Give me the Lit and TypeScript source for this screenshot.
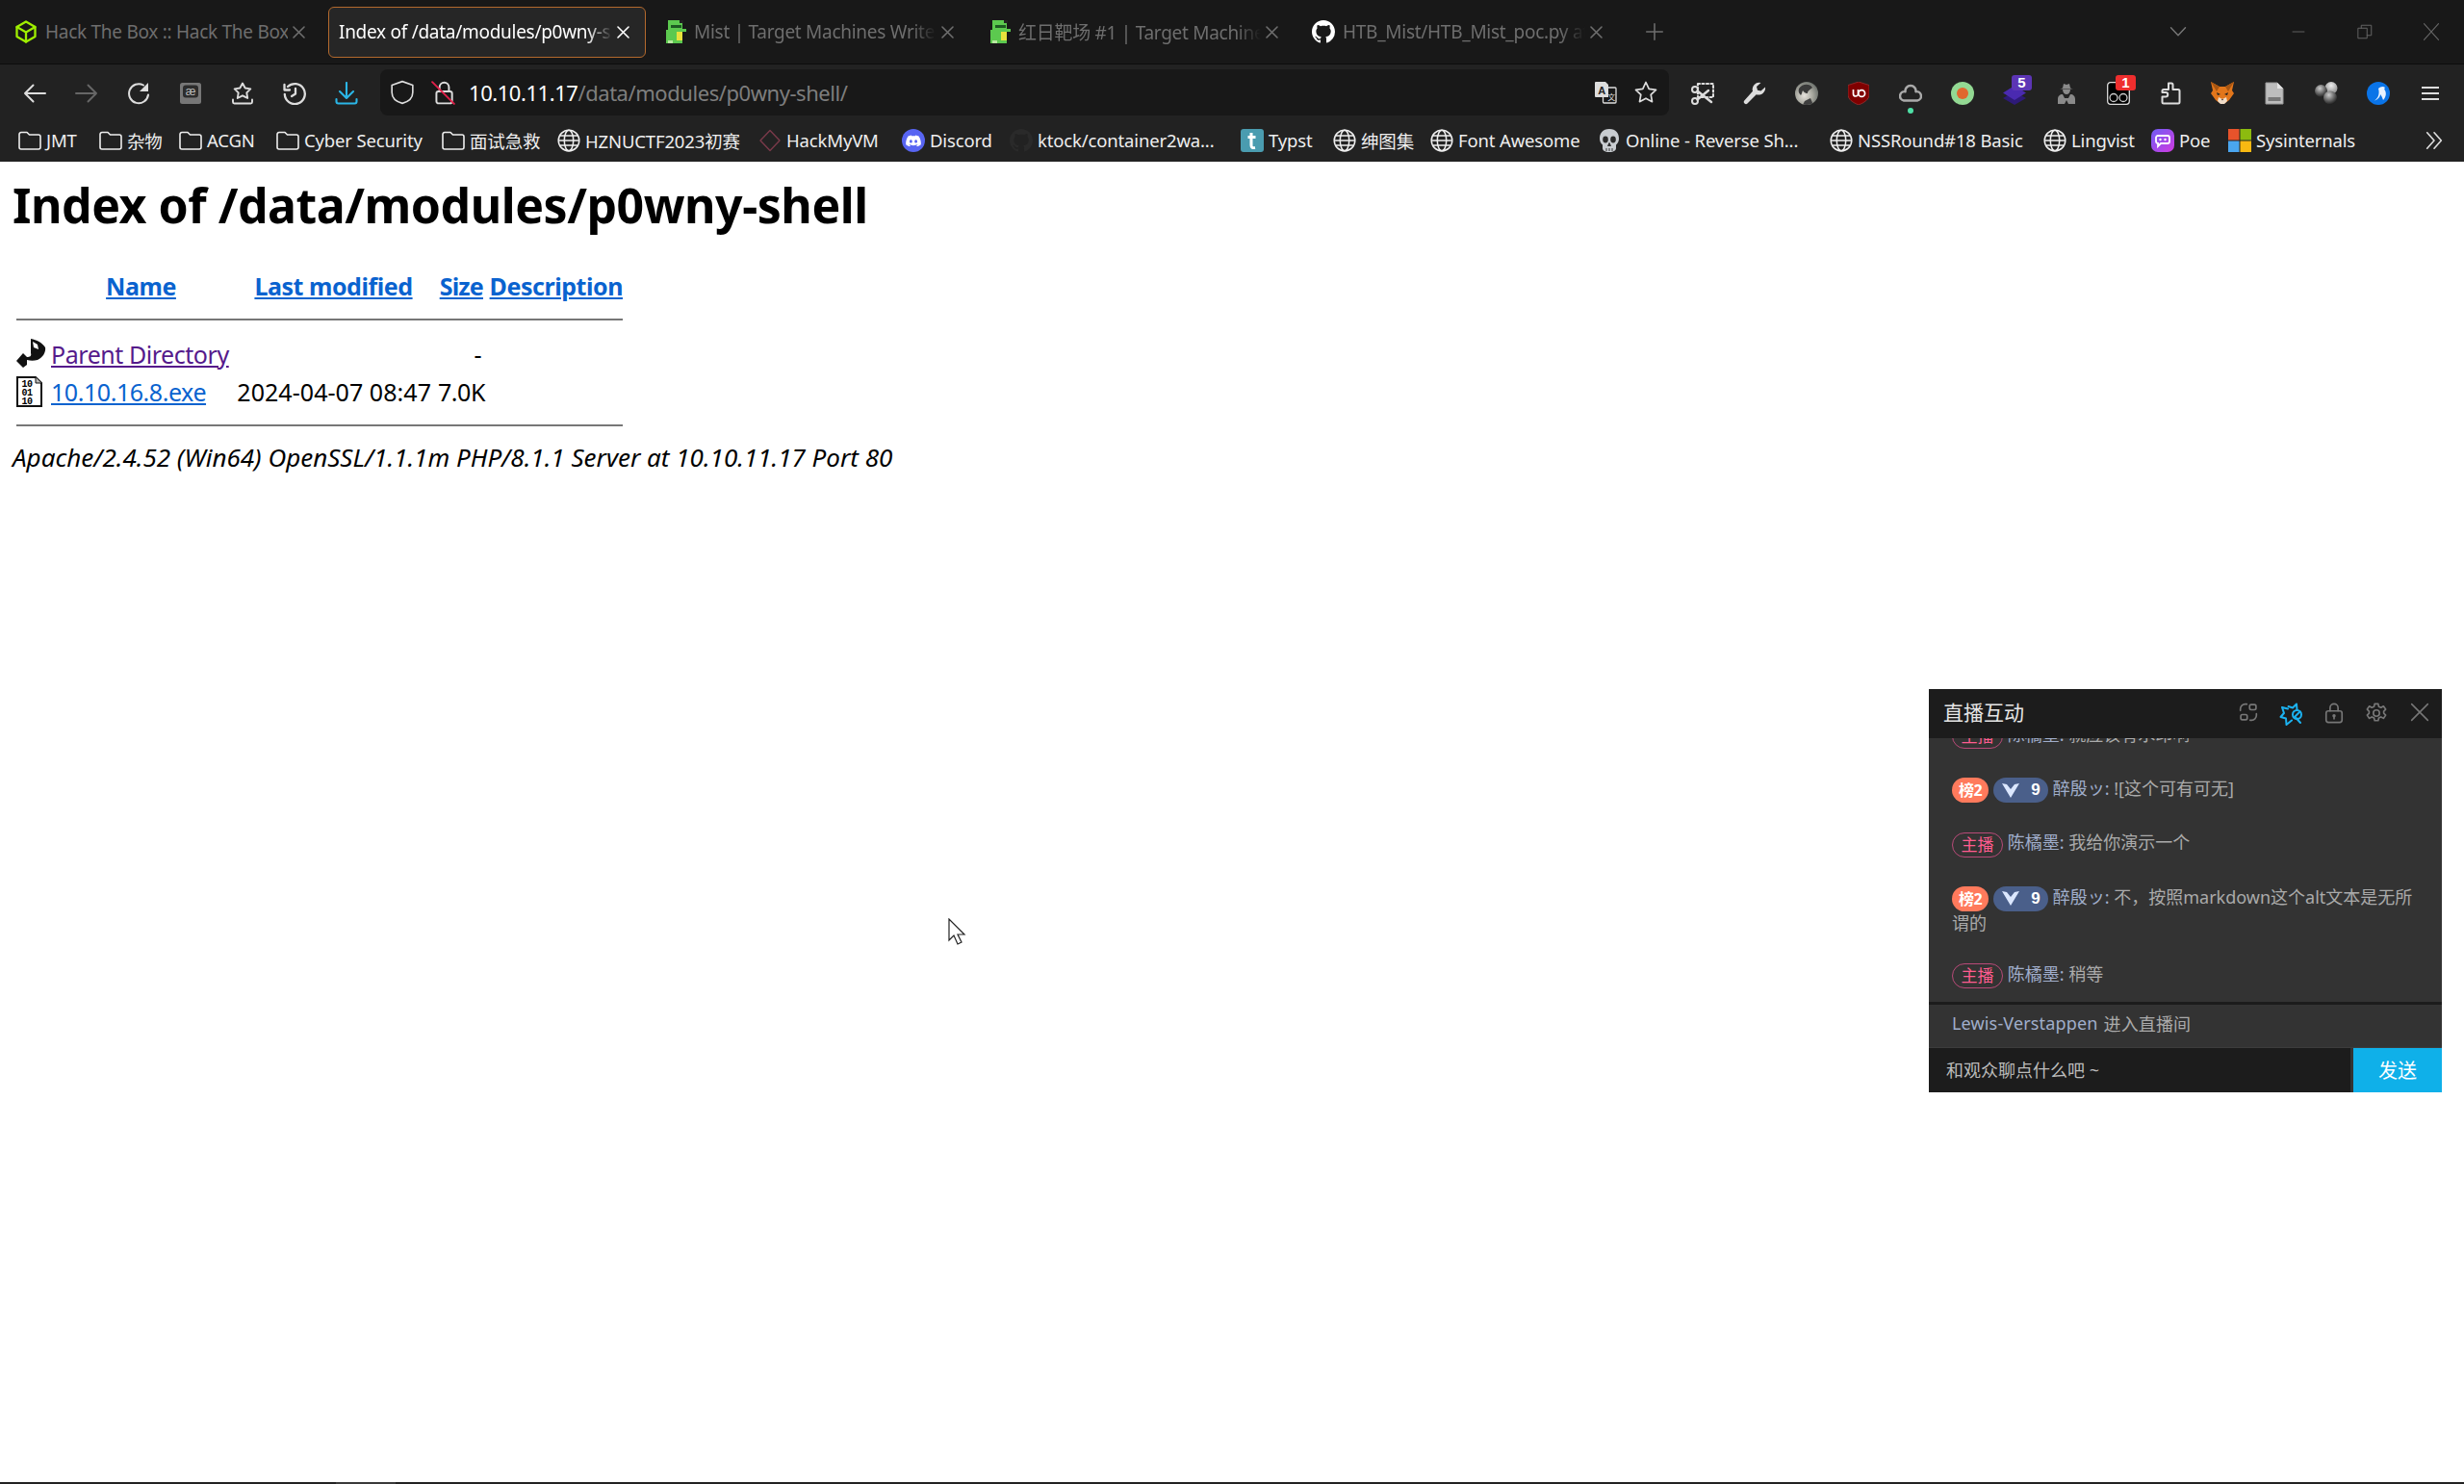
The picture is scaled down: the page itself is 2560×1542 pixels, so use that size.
import { LitElement, html, css, svg } from "lit";
import { customElement } from "lit/decorators.js";

const GH = "M8 0C3.58 0 0 3.58 0 8c0 3.54 2.29 6.53 5.47 7.59.4.07.55-.17.55-.38 0-.19-.01-.82-.01-1.49-2.01.37-2.53-.49-2.69-.94-.09-.23-.48-.94-.82-1.13-.28-.15-.68-.52-.01-.53.63-.01 1.08.58 1.23.82.72 1.21 1.87.87 2.33.66.07-.52.28-.87.51-1.07-1.78-.2-3.64-.89-3.64-3.95 0-.87.31-1.59.82-2.15-.08-.2-.36-1.02.08-2.12 0 0 .67-.21 2.2.82.64-.18 1.32-.27 2-.27.68 0 1.36.09 2 .27 1.53-1.04 2.2-.82 2.2-.82.44 1.1.16 1.92.08 2.12.51.56.82 1.27.82 2.15 0 3.07-1.87 3.75-3.65 3.95.29.25.54.73.54 1.48 0 1.07-.01 1.93-.01 2.2 0 .21.15.46.55.38A8.013 8.013 0 0016 8c0-4.42-3.58-8-8-8z";

const ic = (body: unknown, size = 24, vb = "0 0 24 24") =>
  html`<svg width=${size} height=${size} viewBox=${vb} fill="none" stroke="currentColor" stroke-width="1.7" stroke-linecap="round" stroke-linejoin="round">${body}</svg>`;

const folder = ic(svg`<path d="M1 5.500a2 2 0 0 1 2-2h6l2.500 2.500h9.500a2 2 0 0 1 2 2v11a2 2 0 0 1-2 2H3a2 2 0 0 1-2-2z" stroke-width="1.600"/>`);
const globe = ic(svg`<circle cx="12" cy="12" r="10.800" stroke-width="1.500"/><ellipse cx="12" cy="12" rx="4.700" ry="10.800" stroke-width="1.500"/><path d="M1.500 12h21M3 7h18M3 17h18" stroke-width="1.300"/>`);
const dino = ic(svg`<g stroke="none"><rect x="5" y="0" width="15" height="24" fill="#5cc94f"/><rect x="3" y="10" width="3" height="14" fill="#5cc94f"/><rect x="8" y="5" width="11" height="3" fill="#1d5a22"/><rect x="14" y="12" width="6" height="9" fill="#e8e23c"/><rect x="17" y="0" width="4" height="3" fill="#222"/><rect x="5" y="21" width="5" height="3" fill="#b8e8a0"/><rect x="20" y="9" width="4" height="3" fill="#5cc94f"/></g>`);
const htb = ic(svg`<g stroke="#9fef00" stroke-width="2.300"><path d="M12 1.500 21.500 7v10L12 22.500 2.500 17V7z"/><path d="M2.500 7 12 12.500 21.500 7M12 12.500v10"/></g>`);
const gh = (c: string) => html`<svg width="24" height="24" viewBox="0 0 16 16" fill=${c}><path d=${GH}/></svg>`;

const discord = html`<svg width="24" height="24" viewBox="0 0 24 24"><circle cx="12" cy="12" r="12" fill="#5865f2"/><path fill="#fff" d="M17.500 7.500a12 12 0 0 0-3.200-1l-.4.800a11 11 0 0 0-3.800 0l-.4-.8a12 12 0 0 0-3.200 1C4.500 10.500 4 13.400 4.200 16.300a13 13 0 0 0 3.900 2l.8-1.300-1.300-.6.300-.3a9 9 0 0 0 8.200 0l.3.300-1.300.6.800 1.300a13 13 0 0 0 3.900-2c.3-3.300-.5-6.200-2.300-8.800zM9.400 14.500c-.8 0-1.400-.7-1.400-1.600s.6-1.600 1.400-1.600 1.400.7 1.400 1.600-.6 1.600-1.400 1.600zm5.200 0c-.8 0-1.400-.7-1.400-1.600s.6-1.600 1.400-1.600 1.400.7 1.400 1.600-.6 1.600-1.400 1.600z"/></svg>`;
const typst = html`<svg width="24" height="24" viewBox="0 0 24 24"><rect width="24" height="24" rx="3" fill="#4a9cb0"/><path d="M11 4v13c0 2 1 3 4 2.500M7.500 8.500h8" fill="none" stroke="#fff" stroke-width="3"/></svg>`;
const diamond = ic(svg`<path d="M12 1.500 22 12 12 22.500 2 12z" stroke="#7a3a4a" stroke-width="1.400"/>`);
const skull = html`<svg width="24" height="24" viewBox="0 0 24 24"><path fill="#c8ccd0" d="M12 0C5 0 2 4.500 2 10c0 3 1.200 5 3 6.500V20c0 2 2 4 7 4s7-2 7-4v-3.500c1.800-1.500 3-3.500 3-6.500 0-5.500-3-10-10-10z"/><ellipse cx="8" cy="11" rx="2.800" ry="3.400" fill="#2a2a2a"/><ellipse cx="16" cy="11" rx="2.800" ry="3.400" fill="#2a2a2a"/><path d="M12 14.500l-1.500 3h3zM9 20v3M12 20v3M15 20v3" stroke="#2a2a2a" stroke-width=".9" fill="#2a2a2a"/></svg>`;
const poe = html`<svg width="24" height="24" viewBox="0 0 24 24"><defs><linearGradient id="pg" x1="0" y1="0" x2="1" y2="1"><stop offset="0" stop-color="#6f5cf5"/><stop offset="1" stop-color="#d13be0"/></linearGradient></defs><rect width="24" height="24" rx="7" fill="url(#pg)"/><path d="M7 7h10a2 2 0 0 1 2 2v4a2 2 0 0 1-2 2h-7l-3 3v-3a2 2 0 0 1-2-2V9a2 2 0 0 1 2-2z" fill="none" stroke="#fff" stroke-width="1.800"/><circle cx="9.500" cy="11" r="1.200" fill="#fff"/><circle cx="14.500" cy="11" r="1.200" fill="#fff"/></svg>`;
const ms = html`<svg width="24" height="24" viewBox="0 0 24 24"><rect width="11.500" height="11.500" fill="#e8532b"/><rect x="12.500" width="11.500" height="11.500" fill="#8cbb0f"/><rect y="12.500" width="11.500" height="11.500" fill="#4aa6ef"/><rect x="12.500" y="12.500" width="11.500" height="11.500" fill="#f8b912"/></svg>`;

const tabs = [
  { icon: htb, title: "Hack The Box :: Hack The Box", fade: false },
  { icon: null, title: "Index of /data/modules/p0wny-shell/", fade: true, active: true },
  { icon: dino, title: "Mist | Target Machines WriteUp | HackTheBox", fade: true },
  { icon: dino, title: "红日靶场 #1 | Target Machines WriteUp", fade: true },
  { icon: gh("#fff"), title: "HTB_Mist/HTB_Mist_poc.py at main", fade: true },
];

const nav = [
  { c: "", i: ic(svg`<path d="M23 12H2M10.500 3.500 2 12l8.500 8.500" stroke-width="2"/>`, 24) },
  { c: "dim", i: ic(svg`<path d="M1 12h21M13.500 3.500 22 12l-8.500 8.500" stroke-width="2"/>`, 24) },
  { c: "", i: html`<svg width="24" height="24" viewBox="0 0 24 24" fill="none" stroke="currentColor" stroke-width="2" stroke-linecap="round"><path d="M22 13.500A10 10 0 1 1 17 3.500"/><path d="M22 1v9h-9z" fill="currentColor" stroke="none"/></svg>` },
  { c: "", i: html`<svg width="22" height="22" viewBox="0 0 22 22"><rect width="22" height="22" rx="2.500" fill="#777"/><rect x="3" y="2.500" width="16" height="13" rx="3" fill="#2c2c2c"/><text x="11" y="13" font-size="12" text-anchor="middle" fill="#bbb" font-family="Liberation Sans">æ</text></svg>` },
  { c: "", i: ic(svg`<path d="M12 1.500l2.700 5 5.600.9-4 4 .9 5.600L12 14.300 6.800 17l.9-5.600-4-4 5.600-.9zM2 18.500V21a1.500 1.500 0 0 0 1.500 1.500h17A1.500 1.500 0 0 0 22 21v-2.500" stroke-width="1.900"/>`, 24) },
  { c: "", i: ic(svg`<g stroke-width="2.300"><path d="M5 5A10.500 10.500 0 1 1 1.800 13"/><path d="M1.500 3v5.500H7"/><path d="M13 7v5.500l-4 2.500"/></g>`, 24) },
  { c: "blue", i: ic(svg`<g stroke-width="2.100"><path d="M12 1v15.500M5 10l7 7 7-7M1.500 18v2.500a2 2 0 0 0 2 2h17a2 2 0 0 0 2-2V18"/></g>`, 24) },
];

const ext = [
  ic(svg`<rect x="7" y="2" width="16" height="14" stroke-dasharray="2 2.500" stroke-width="2.200"/><circle cx="4" cy="8" r="3" stroke-width="2"/><circle cx="4" cy="20" r="3" stroke-width="2"/><path d="M6.500 9.500 21 21M6.500 18.500 18 9" stroke-width="2.400"/>`, 24),
  ic(svg`<path d="M23 5.500l-4.500 4-3.500-.8L14 5l4.500-4a7 7 0 0 0-8.500 8.800L1.300 19.500a2.200 2.200 0 0 0 3.200 3l9.200-9.300A7 7 0 0 0 23 5.500z" fill="currentColor" stroke="none"/>`, 24),
  html`<svg width="24" height="24" viewBox="0 0 24 24"><defs><radialGradient id="av" cx=".4" cy=".6" r=".65"><stop offset="0" stop-color="#e6e2dc"/><stop offset=".55" stop-color="#a9a9a0"/><stop offset="1" stop-color="#6a6f6a"/></radialGradient><clipPath id="avc"><circle cx="12" cy="12" r="12"/></clipPath></defs><circle cx="12" cy="12" r="12" fill="url(#av)"/><g clip-path="url(#avc)"><path d="M4 7c3-5 11-6 14-1-2 2-5 3-5 6-3 0-4-2-5-3-1 2-1 4-2 5-2-2-3-4-2-7z" fill="#3a3a3a"/><path d="M10 20l6-3 3 7H8z" fill="#3e3e3e"/></g></svg>`,
  html`<svg width="22" height="24" viewBox="0 0 22 24"><path d="M11 0l11 3.500V13c0 5.500-5 8.500-11 11C5 21.500 0 18.500 0 13V3.500z" fill="#800000" stroke="#9c3030" stroke-width=".8"/><path d="M5.500 8v4.500a2.500 2.500 0 0 0 5 0V8" fill="none" stroke="#fff" stroke-width="1.700"/><circle cx="14.200" cy="12" r="3.400" fill="none" stroke="#fff" stroke-width="1.700"/></svg>`,
  html`<span class="cloud"><svg width="24" height="24" viewBox="0 0 24 24" fill="none" stroke="#aaa" stroke-width="2.500" stroke-linejoin="round"><path d="M12 4a5.500 5.500 0 0 1 5.500 6.200 4.700 4.700 0 0 1 1.500 9.300H5a4.700 4.700 0 0 1 1.500-9.300A5.500 5.500 0 0 1 12 4z"/></svg><i class="dot"></i></span>`,
  html`<svg width="24" height="24" viewBox="0 0 24 24"><circle cx="12" cy="12" r="12" fill="#93d993"/><circle cx="12" cy="12" r="6" fill="#e0682e"/></svg>`,
  html`<span class="badged"><svg width="24" height="24" viewBox="0 0 24 24"><path d="M12 10 24 17 12 24 0 17z" fill="#2e1a78"/><path d="M12 4 24 11.500 12 19 0 11.500z" fill="#4a2ab0"/></svg><b class="b5">5</b></span>`,
  html`<svg width="18" height="22" viewBox="0 0 18 22"><g fill="#8a8a8a"><path d="M2 6.500c2-.5 3-1 3-1L6 1l3 1 3-1 1 4.500s1 .5 3 1z"/><path d="M5 7h8c0 3-2 5-4 5s-4-2-4-5z"/><path d="M0 22v-5c0-3 2-5 5-5l2 4h4l2-4c3 0 5 2 5 5v5h-7l-2-4-2 4z"/></g></svg>`,
  html`<span class="badged"><svg width="24" height="24" viewBox="0 0 24 24"><rect x=".7" y=".7" width="22.600" height="22.600" rx="3" fill="#000" stroke="#ddd" stroke-width="1.300"/><circle cx="7" cy="16.500" r="4" fill="none" stroke="#ccc" stroke-width="1.300"/><circle cx="17" cy="16.500" r="4" fill="none" stroke="#ccc" stroke-width="1.300"/></svg><b class="b1">1</b></span>`,
  ic(svg`<path d="M10 1.500h3a1.500 1.500 0 0 1 1.500 1.500v5H20a1.500 1.500 0 0 1 1.500 1.500V21a1.500 1.500 0 0 1-1.500 1.500H5A1.500 1.500 0 0 1 3.500 21v-5.500H7a2.200 2.200 0 0 0 0-4.500H3.500V9.500A1.500 1.500 0 0 1 5 8h5z" stroke-width="2"/>`, 24),
  html`<svg width="24" height="24" viewBox="0 0 24 24"><path d="M0 0l9 5h6l9-5-2 9 2 3-5 7-4 3-3 1-3-1-4-3-5-7 2-3z" fill="#e2761b"/><path d="M8 16l4 2 4-2 1 4-3 3h-4l-3-3z" fill="#f0dcc8"/><path d="M6 11l4 2-3 1zM18 11l-4 2 3 1z" fill="#222"/><path d="M0 0l9 5-3 5zM24 0l-9 5 3 5z" fill="#a85612"/><path d="M11 18h2l-1 1.500z" fill="#222"/></svg>`,
  html`<svg width="20" height="24" viewBox="0 0 20 24"><path d="M1 1h12l6 6v16H1z" fill="#bdbdbd" stroke="#999"/><path d="M13 1l6 6h-6z" fill="#e4e4e4"/><rect x="3.500" y="16" width="13" height="4" fill="#777"/></svg>`,
  html`<svg width="24" height="24" viewBox="0 0 24 24"><defs><radialGradient id="bl" cx=".4" cy=".3" r=".8"><stop offset="0" stop-color="#ccc"/><stop offset=".6" stop-color="#555"/><stop offset="1" stop-color="#0a0a0a"/></radialGradient><radialGradient id="bw" cx=".5" cy=".3" r=".8"><stop offset="0" stop-color="#eee"/><stop offset="1" stop-color="#777"/></radialGradient></defs><circle cx="17" cy="6.500" r="6.500" fill="url(#bw)"/><circle cx="6.500" cy="9.500" r="6.500" fill="url(#bl)"/><circle cx="16" cy="16.500" r="7" fill="url(#bl)"/></svg>`,
  html`<svg width="24" height="24" viewBox="0 0 24 24"><circle cx="12" cy="12" r="12" fill="#0a74e8"/><path d="M6 20c5-1 8-7 6-13 2-2 5-3 7-1-1 1-1 2 0 3 2 4 0 8-2 10-1-3-2-5-3-6 0 3-3 6-8 7z" fill="#e8f2ff"/></svg>`,
  html`<svg width="18" height="16" viewBox="0 0 18 16" stroke="#ddd" stroke-width="2"><path d="M0 2h18M0 8h18M0 14h18"/></svg>`,
];

const bookmarks = [
  { i: folder, t: "JMT", w: 84 },
  { i: folder, t: "杂物", w: 83 },
  { i: folder, t: "ACGN", w: 101 },
  { i: folder, t: "Cyber Security", w: 172 },
  { i: folder, t: "面试急救", w: 120 },
  { i: globe, t: "HZNUCTF2023初赛", w: 209 },
  { i: diamond, t: "HackMyVM", w: 149 },
  { i: discord, t: "Discord", w: 112 },
  { i: gh("#2a2a2a"), t: "ktock/container2wa...", w: 240 },
  { i: typst, t: "Typst", w: 96 },
  { i: globe, t: "绅图集", w: 101 },
  { i: globe, t: "Font Awesome", w: 174 },
  { i: skull, t: "Online - Reverse Sh...", w: 241 },
  { i: globe, t: "NSSRound#18 Basic", w: 222 },
  { i: globe, t: "Lingvist", w: 112 },
  { i: poe, t: "Poe", w: 80 },
  { i: ms, t: "Sysinternals", w: 150 },
];

const host = html`<span class="host">主播</span>`;
const fan = html`<span class="rank">榜2</span><span class="medal"><svg width="20" height="17" viewBox="0 0 20 17"><path d="M1 1l5 1 4 5 4-5 5-1-9 15z" fill="#dbe7ff"/></svg><b>9</b></span>`;
const msg = (badge: unknown, name: string, text: string) =>
  html`<div class="msg">${badge}<span class="nm"> ${name}: </span><span class="tx">${text}</span></div>`;

@customElement("app-root")
export class AppRoot extends LitElement {
  static styles = css`
    :host { display: flex; flex-direction: column; height: 1542px; width: 2560px; overflow: hidden; background: #fff; font-family: "Noto Sans", "Noto Sans CJK SC", sans-serif; color: #000; }
    svg { display: block; flex: none; }
    .tabbar { height: 66px; background: #181818; border-bottom: 1px solid #0c0c0c; display: flex; align-items: center; padding-left: 4px; gap: 7px; flex: none; position: relative; box-sizing: content-box; }
    .tab { width: 330px; height: 53px; box-sizing: border-box; display: flex; align-items: center; padding: 0 16px 0 10px; border: 1px solid transparent; border-radius: 6px; color: #6e6e6e; font-size: 19px; letter-spacing: -0.28px; flex: none; }
    .tab.active { background: #262626; border-color: #b3692d; color: #fff; }
    .fav { width: 24px; margin-right: 8px; flex: none; color: #fff; }
    .tt { flex: 1; overflow: hidden; white-space: nowrap; min-width: 0; }
    .tt.fade { -webkit-mask-image: linear-gradient(to right, #000 calc(100% - 26px), transparent); mask-image: linear-gradient(to right, #000 calc(100% - 26px), transparent); }
    .x { width: 13px; height: 13px; margin-left: 5px; flex: none; }
    .tab.active .x { color: #fff; }
    .plus { width: 24px; margin-left: 19px; color: #6e6e6e; }
    .sys { margin-left: auto; display: flex; align-items: center; color: #666; }
    .sys > span { display: flex; justify-content: center; width: 69px; }
    .sys > span:first-child { margin-right: 56px; color: #777; }
    .toolbar { height: 54px; background: #222; display: flex; padding: 0 8px 0 9px; align-items: flex-end; flex: none; }
    .btn { width: 54px; height: 49px; display: flex; align-items: center; justify-content: center; color: #ddd; flex: none; position: relative; }
    .btn.dim { color: #666; }
    .btn.blue { color: #2bb6e6; }
    .url { flex: 1; height: 48px; margin: 0 8px 1px; background: #181818; border-radius: 8px; display: flex; align-items: center; color: #ddd; font-size: 22px; letter-spacing: -0.45px; }
    .url .sh { width: 26px; margin-left: 10px; }
    .url .lk { width: 26px; margin-left: 17px; position: relative; }
    .url .addr { margin-left: 13px; flex: 1; color: #fff; }
    .url .addr span { color: #7e7e7e; }
    .url .tr { width: 26px; margin-right: 16px; }
    .url .end { margin-right: 12px; }
    .cloud { position: relative; display: block; }
    .dot { position: absolute; left: 9px; top: 27px; width: 6px; height: 6px; border-radius: 3px; background: #4fe0a6; }
    .badged { position: relative; display: block; }
    .b5, .b1 { position: absolute; top: -7px; left: 9px; width: 21px; height: 16px; border-radius: 3px; color: #fff; font: 700 15px "Liberation Sans", sans-serif; display: flex; align-items: center; justify-content: center; }
    .b5 { background: #5c35b5; }
    .b1 { background: #ee2e2e; }
    .bm { height: 45px; padding-top: 2px; background: #222; display: flex; align-items: center; padding-left: 19px; color: #eee; font-size: 18.500px; letter-spacing: -0.15px; flex: none; }
    .bi { display: flex; align-items: center; gap: 5px; white-space: nowrap; flex: none; }
    .bm .more { margin-left: auto; margin-right: 20px; color: #ddd; }
    .page { flex: 1; position: relative; min-height: 0; padding: 0 13px; }
    h1 { margin: 0; padding-top: 14px; font-size: 50px; line-height: 62px; font-weight: 700; letter-spacing: -0.47px; }
    table { border-collapse: separate; border-spacing: 0; margin: 32px 0 0 4px; font-size: 25px; letter-spacing: -0.45px; table-layout: fixed; width: 630px; }
    th { font-weight: 700; height: 42px; padding: 0; }
    td { height: 39px; padding: 0; white-space: nowrap; }
    a { color: #0a63cf; text-decoration: underline; }
    a.v { color: #551a8b; }
    .c1 { width: 36px; } .c2 { width: 192px; } .c3 { width: 203px; } .c4 { width: 56px; }
    th.name { padding-right: 5px; }
    th.size { text-align: right; padding-right: 2px; letter-spacing: -0.8px; }
    th.desc { text-align: right; }
    .r { text-align: right; }
    .date { letter-spacing: 0.05px; }
    .dash { padding-right: 4px; }
    .rule td { height: auto; vertical-align: top; }
    .r1 td { padding: 13px 0 15px; }
    .r2 td { padding: 15px 0 14px; }
    .rule div { height: 2px; background: #777; }
    address { font-size: 26px; font-style: italic; line-height: 36px; white-space: nowrap; }
    .cursor { position: absolute; left: 985px; top: 786px; }
    .chat { position: absolute; right: 23px; top: 548px; width: 533px; height: 419px; background: #333; display: flex; flex-direction: column; color: #aaa; font-size: 18px; }
    .chead { height: 51px; background: #1c1c1c; flex: none; display: flex; align-items: center; padding: 0 0 0 15px; color: #e6e6e6; font-size: 21px; }
    .chead .title { padding-bottom: 6px; }
    .chead .ics { margin-left: auto; display: flex; margin-right: 1px; color: #777; }
    .chead .ics span { width: 44.500px; display: flex; justify-content: center; }
    .chead .ics .on { color: #1cb2f0; }
    .msgs { flex: 1; min-height: 0; overflow: hidden; display: flex; flex-direction: column; justify-content: flex-end; padding: 0 24px 14px 24px; border-bottom: 3px solid #1c1c1c; }
    .msg { line-height: 24px; margin-top: 29px; flex: none; }
    .nm { color: #a0aecb; }
    .tx { color: #aaa; }
    .host, .rank, .medal { display: inline-flex; align-items: center; justify-content: center; vertical-align: middle; box-sizing: border-box; height: 26px; }
    .host { width: 53px; border: 1px solid #b84a78; border-radius: 13px; color: #ff5c8f; font-size: 17px; }
    .rank { width: 38px; background: #ff7a5c; border-radius: 13px; color: #fff; font-weight: 700; font-size: 16px; letter-spacing: -0.5px; }
    .medal { width: 57px; margin-left: 5px; background: #4a5f8a; border-radius: 13px; color: #fff; font-size: 17px; gap: 11px; }
    .medal b { font-family: "Liberation Sans", sans-serif; }
    .enter { height: 37px; padding-bottom: 7px; flex: none; display: flex; align-items: center; padding-left: 24px; color: #aaa; gap: 6px; letter-spacing: 0.15px; }
    .enter span { color: #a0aecb; }
    .inp { height: 46px; flex: none; display: flex; border-top: 1px solid #3c3c3c; background: #333; }
    .field { flex: 1; background: #1c1c1c; margin-right: 3px; display: flex; align-items: center; padding: 0 0 2px 18px; color: #bbb; white-space: pre; }
    .send { width: 92px; background: #0fb0e9; color: #fff; font-size: 20px; display: flex; align-items: center; justify-content: center; padding-bottom: 2px; box-sizing: border-box; }
    .strip { height: 2px; flex: none; background: #222; display: flex; padding-left: 349px; }
    .strip i { width: 62px; background: #3a3a3a; }
  `;

  render() {
    const x = ic(svg`<path d="M1 1l11 11M12 1 1 12" stroke-width="1.600"/>`, 13, "0 0 13 13");
    return html`
      <div class="tabbar">
        ${tabs.map((t) => html`<div class="tab ${t.active ? "active" : ""}">
          ${t.icon ? html`<span class="fav">${t.icon}</span>` : ""}
          <span class="tt ${t.fade ? "fade" : ""}">${t.title}</span>
          <span class="x">${x}</span>
        </div>`)}
        <span class="plus">${ic(svg`<path d="M12 3v18M3 12h18"/>`, 22)}</span>
        <div class="sys">
          <span>${ic(svg`<path d="M3 7l9 9.500L21 7"/>`, 20)}</span>
          <span>${ic(svg`<path d="M4 12h16" stroke-width="1.200"/>`, 18)}</span>
          <span>${ic(svg`<path d="M3 7h12v14H3zM7 7V3h14v14h-6" stroke-width="1.300"/>`, 18)}</span>
          <span>${ic(svg`<path d="M3 2l18 20M21 2 3 22" stroke-width="1.300"/>`, 20)}</span>
        </div>
      </div>
      <div class="toolbar">
        ${nav.map((n) => html`<div class="btn ${n.c}">${n.i}</div>`)}
        <div class="url">
          <span class="sh">${ic(svg`<path d="M12 1.500l10 3.500v7c0 5.500-4.500 9-10 10.500C6.500 21 2 17.500 2 12V5z" stroke-width="1.500"/>`, 26)}</span>
          <span class="lk">${ic(svg`<rect x="5" y="11" width="15" height="11.500" rx="2" stroke-width="1.800"/><path d="M8 11V7a4.500 4.500 0 0 1 9 0v4" stroke-width="1.800"/><path d="M1 2l21 21" stroke="#e0204a" stroke-width="1.800"/>`, 26)}</span>
          <span class="addr">10.10.11.17<span>/data/modules/p0wny-shell/</span></span>
          <span class="tr"><svg width="24" height="24" viewBox="0 0 24 24"><rect x="9.500" y="7" width="13.500" height="16" rx="1" fill="#181818" stroke="#ddd" stroke-width="1.300"/><path d="M1 2a1 1 0 0 1 1-1h10l3 3v13H2a1 1 0 0 1-1-1z" fill="#ddd"/><text x="8" y="14" font-size="11" font-weight="700" text-anchor="middle" fill="#222" font-family="Liberation Sans">A</text><text x="18" y="20" font-size="8" text-anchor="middle" fill="#ddd" font-family="Noto Sans CJK SC">文</text></svg></span>
          <span class="end">${ic(svg`<path d="M12 1.500l3.200 6.800 7.300 1-5.300 5.100 1.300 7.300L12 18.200l-6.500 3.500 1.300-7.300L1.500 9.300l7.300-1z" stroke-width="1.700"/>`, 24)}</span>
        </div>
        ${ext.map((e) => html`<div class="btn">${e}</div>`)}
      </div>
      <div class="bm">
        ${bookmarks.map((b) => html`<div class="bi" style="width:${b.w}px">${b.i}<span>${b.t}</span></div>`)}
        <span class="more">${ic(svg`<path d="M4 3l8 9-8 9M12 3l8 9-8 9" stroke-width="1.800"/>`, 22)}</span>
      </div>
      <div class="page">
        <h1>Index of /data/modules/p0wny-shell</h1>
        <table>
          <colgroup><col class="c1" /><col class="c2" /><col class="c3" /><col class="c4" /><col /></colgroup>
          <tr><th></th><th class="name"><a>Name</a></th><th><a>Last modified</a></th><th class="size"><a>Size</a></th><th class="desc"><a>Description</a></th></tr>
          <tr class="rule r1"><td colspan="5"><div></div></td></tr>
          <tr>
            <td><svg width="31" height="31" viewBox="0 0 31 31"><path d="M15 0c6 1 12 4 15 9 1 5-3 11-8 13-4 1-7 1-11 0v5l-4 3-7-7 7-8 4 4c3 0 5-1 4-4z" fill="#111"/><path d="M17 3l5 3 1 5-5-2z" fill="#fff"/></svg></td>
            <td><a class="v">Parent Directory</a></td><td></td><td class="r dash">-</td><td></td>
          </tr>
          <tr>
            <td><svg width="27" height="32" viewBox="0 0 27 32"><path d="M1 1h19l6 6v24H1z" fill="#fff" stroke="#111" stroke-width="2"/><path d="M20 1v6h6" fill="#bbb" stroke="#111"/><text x="11" y="11" font-size="10" font-weight="700" text-anchor="middle" font-family="Liberation Mono">10</text><text x="11" y="20" font-size="10" font-weight="700" text-anchor="middle" font-family="Liberation Mono">01</text><text x="11" y="29" font-size="10" font-weight="700" text-anchor="middle" font-family="Liberation Mono">10</text></svg></td>
            <td><a>10.10.16.8.exe</a></td><td class="r date">2024-04-07 08:47</td><td class="r">7.0K</td><td></td>
          </tr>
          <tr class="rule r2"><td colspan="5"><div></div></td></tr>
        </table>
        <address>Apache/2.4.52 (Win64) OpenSSL/1.1.1m PHP/8.1.1 Server at 10.10.11.17 Port 80</address>
        <svg class="cursor" width="19" height="28" viewBox="0 0 19 28"><path d="M1 1v22l5-5 4 9 4-2-4-8h7z" fill="#fff" stroke="#222" stroke-width="1.200"/></svg>
        <div class="chat">
          <div class="chead"><span class="title">直播互动</span>
            <div class="ics">
              <span>${ic(svg`<g stroke-width="2"><path d="M2 10V8a6 6 0 0 1 6-6h2"/><path d="M22 14v2a6 6 0 0 1-6 6h-2"/><rect x="13.500" y="2.500" width="8" height="6.500" rx="2"/><rect x="2.500" y="15" width="8" height="6.500" rx="2"/></g>`, 20)}</span>
              <span class="on">${ic(svg`<g stroke-width="2"><path d="M9.500 4 14 5.500 18 1.500l.5 6M22 21 17.500 16M13 18.500 7.500 23l-.5-6.500-5.500-1.500 3.500-4-2-6 6 1.500"/><circle cx="18.500" cy="12.500" r="4.500"/><path d="M15.500 15.500l6-6"/></g>`, 24)}</span>
              <span>${ic(svg`<g stroke-width="1.800"><rect x="3" y="9.500" width="18" height="13" rx="2.500"/><path d="M7.500 9.500V6a4.500 4.500 0 0 1 9 0v3.500"/><circle cx="12" cy="15" r="1"/><path d="M12 16v2.500"/></g>`, 22)}</span>
              <span>${ic(svg`<g stroke-width="1.800"><circle cx="12" cy="12" r="3.500"/><path d="M10 1.500h4l.7 3.100 2.500 1.100 2.800-1.600 2.500 3.600-2.200 2.200v2.200l2.200 2.200-2.500 3.600-2.800-1.600-2.500 1.100-.7 3.100h-4l-.7-3.100-2.500-1.100-2.800 1.600-2.500-3.600 2.200-2.200v-2.200L1.500 7.700 4 4.100l2.800 1.600 2.500-1.100z"/></g>`, 22)}</span>
              <span>${ic(svg`<path d="M2 2l20 20M22 2 2 22" stroke-width="1.900"/>`, 20)}</span>
            </div>
          </div>
          <div class="msgs">
            ${msg(host, "陈橘墨", "就应该有水印啊")}
            ${msg(fan, "醉殷ッ", "![这个可有可无]")}
            ${msg(host, "陈橘墨", "我给你演示一个")}
            ${msg(fan, "醉殷ッ", "不，按照markdown这个alt文本是无所谓的")}
            ${msg(host, "陈橘墨", "稍等")}
          </div>
          <div class="enter"><span>Lewis-Verstappen</span>进入直播间</div>
          <div class="inp">
            <div class="field">和观众聊点什么吧 ~</div>
            <div class="send">发送</div>
          </div>
        </div>
      </div>
      <div class="strip"><i></i></div>
    `;
  }
}
